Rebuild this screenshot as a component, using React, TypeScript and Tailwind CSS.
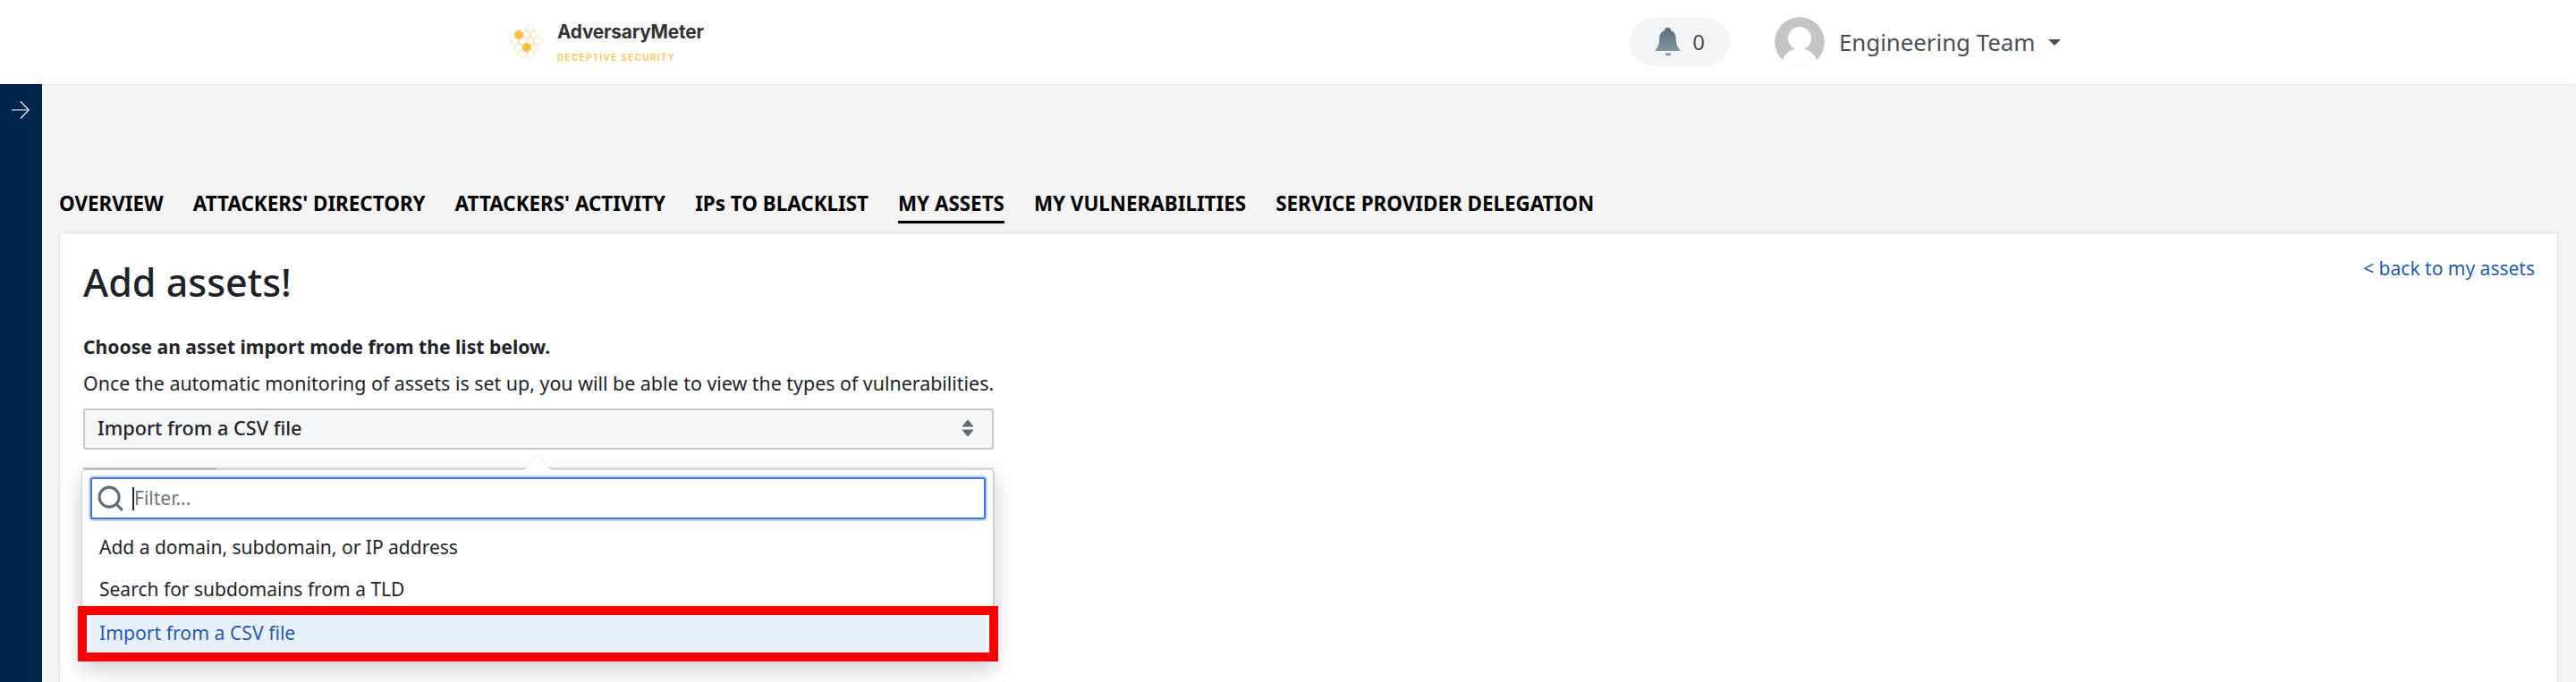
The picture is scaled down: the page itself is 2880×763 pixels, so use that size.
import { Search } from "lucide-react"

const tabs = [
  "OVERVIEW",
  "ATTACKERS' DIRECTORY",
  "ATTACKERS' ACTIVITY",
  "IPs TO BLACKLIST",
  "MY ASSETS",
  "MY VULNERABILITIES",
  "SERVICE PROVIDER DELEGATION",
]

const paleHexes = [
  [22, 7], [19, 14], [27, 14], [6, 21], [14, 21], [23, 21], [31, 21], [10, 28], [27, 28], [14, 35], [23, 35],
]

function hexPoints(x: number, y: number, r: number) {
  const w = r * 0.866
  return `${x},${y - r} ${x + w},${y - r / 2} ${x + w},${y + r / 2} ${x},${y + r} ${x - w},${y + r / 2} ${x - w},${y - r / 2}`
}

function Logo() {
  return (
    <div className="flex w-[220px] items-center">
      <svg width="40" height="44" viewBox="0 0 40 44" className="mr-[13px] shrink-0">
        {paleHexes.map(([x, y]) => (
          <polygon key={`${x}-${y}`} points={hexPoints(x, y, 5)} fill="none" stroke="#fbe2ad" strokeWidth="1" />
        ))}
        <polygon points={hexPoints(10, 14, 5.5)} fill="#fbbf3c" />
        <polygon points={hexPoints(19, 28, 5.5)} fill="#fbbf3c" />
      </svg>
      <div className="flex flex-col">
        <span className="-mt-[2px] text-[20.8px] leading-[26px] font-bold tracking-[-0.2px] whitespace-nowrap text-[#333333] font-['Inter',sans-serif]">AdversaryMeter</span>
        <span className="mt-[9px] text-[10px] leading-[12px] font-semibold tracking-[1.3px] whitespace-nowrap text-[#fbc04e] font-['Inter',sans-serif]">DECEPTIVE SECURITY</span>
      </div>
    </div>
  )
}

function Bell() {
  return (
    <svg width="30" height="34" viewBox="0 0 30 34">
      <defs>
        <linearGradient id="bell" x1="0" y1="0" x2="0" y2="1">
          <stop offset="0" stopColor="#5a6b79" />
          <stop offset="1" stopColor="#7f98a2" />
        </linearGradient>
      </defs>
      <path d="M15 1a3 3 0 0 1 3 3.2c4.200 1.300 5.600 4.800 5.800 9 .2 5.300 1.200 9 4.700 12.800v1H.5v-1C4 22.200 5 18.500 5.200 13.200c.2-4.200 1.600-7.700 5.800-9A3 3 0 0 1 15 1z" fill="url(#bell)" />
      <path d="M11.500 29.500h7c-.5 2-1.800 3-3.500 3s-3-1-3.500-3z" fill="#7f98a2" />
    </svg>
  )
}

function Header() {
  return (
    <header className="relative z-10 flex h-[94px] items-center bg-white pl-[570px] shadow-[0_1px_3px_rgba(0,0,0,0.06)]">
      <Logo />
      <div className="ml-[1032px] flex h-[54px] w-[112px] items-center justify-center gap-[12px] rounded-[27px] bg-[#f3f4f6]">
        <Bell />
        <span className="text-[24px] text-[#495057]">0</span>
      </div>
      <div className="ml-[50px] flex items-center">
        <svg width="56" height="56" viewBox="0 0 54 54" className="overflow-hidden rounded-full">
          <circle cx="27" cy="27" r="27" fill="#c4c4c4" />
          <circle cx="27" cy="23" r="12.500" fill="#fff" />
          <ellipse cx="27" cy="52" rx="19.500" ry="18" fill="#fff" />
        </svg>
        <span className="ml-[16px] text-[25.8px] text-[#495057]">Engineering Team</span>
        <span className="ml-[15px] h-0 w-0 border-x-[7px] border-t-[7px] border-x-transparent border-t-[#495057]" />
      </div>
    </header>
  )
}

function Dropdown() {
  return (
    <div className="absolute left-[24px] top-[265px] w-[1021px] rounded-t-[3px] rounded-b-[3px] border-b border-l border-r-2 border-[#cfcfcf] bg-white pt-[8px] shadow-[0_8px_24px_rgba(0,0,0,0.2)]">
      <div className="absolute -top-[3px] left-[1px] flex h-[3px] w-[1018px]">
        <div className="w-[149px] bg-[#bcc0c5]" />
        <div className="flex-1 bg-[#d6d8db]" />
      </div>
      <div className="absolute -top-[11px] left-[498px] h-[22px] w-[22px] rotate-45 bg-white shadow-[-1px_-1px_1px_rgba(0,0,0,0.06)]" />
      <div className="relative ml-[9px] mr-[8px] flex h-[47px] items-center rounded-[3px] border-2 border-[#3a78d8] bg-white pl-[4px] shadow-[0_0_0_2px_#c4d7f3]">
        <Search size={33} strokeWidth={2.2} className="text-[#5f6b7c]" />
        <span className="ml-[8px] h-[26px] w-[2px] bg-[#1f2937]" />
        <span className="text-[21px] text-[#6c757d]">Filter...</span>
      </div>
      <div className="mt-[8px] flex flex-col">
        <div className="flex h-[47px] items-center pl-[19px] text-[21px] text-[#212529]">Add a domain, subdomain, or IP address</div>
        <div className="flex h-[47px] items-center pl-[19px] text-[21px] text-[#212529]">Search for subdomains from a TLD</div>
        <div className="relative mb-[10px] ml-[8px] mr-[7px] mt-[5px] flex h-[42px] items-center bg-[#e9f0fa] pl-[11px] pb-[2px] text-[21.2px] text-[#1f5bb0]">
          Import from a CSV file
          <div className="absolute -inset-y-[10px] -inset-x-[13px] border-[10px] border-[#ff0000]" />
        </div>
      </div>
    </div>
  )
}

export default function App() {
  return (
    <div className="flex h-[763px] flex-col overflow-hidden bg-[#f4f4f4] font-['Noto_Sans',sans-serif]">
      <Header />
      <div className="flex min-h-0 flex-1">
        <aside className="w-[47px] shrink-0 bg-[#00264d] pl-[13px] pt-[19px]">
          <svg width="20" height="20" viewBox="0 0 20 20" fill="none" stroke="#ffffff" strokeWidth="1.2">
            <path d="M0 10H19M10 .5L19.200 10 10 19.500" />
          </svg>
        </aside>
        <main className="flex min-w-0 flex-1 flex-col pl-[19px] pr-[20px] pt-[118px]">
          <nav className="mb-[10px] flex gap-[33px]">
            {tabs.map((t) => (
              <div
                key={t}
                className={`h-[38px] pt-[2px] text-[22.4px] leading-[28px] font-bold whitespace-nowrap text-black ${t === "MY ASSETS" ? "border-b-[3px] border-black" : ""}`}
              >
                {t}
              </div>
            ))}
          </nav>
          <section className="relative h-[700px] shrink-0 border border-[#dee2e6] bg-white pl-[26px] pr-[25px] pt-[24px] shadow-[0_0_6px_rgba(0,0,0,0.04)]">
            <div className="flex items-start justify-between">
              <h1 className="pt-[1px] text-[43px] leading-[60px] font-medium text-[#1e2329]">Add assets!</h1>
              <a className="text-[21px] text-[#1f5bb0]">&lt; back to my assets</a>
            </div>
            <p className="mt-[28px] text-[21.15px] leading-[28px] font-bold text-[#212529]">Choose an asset import mode from the list below.</p>
            <p className="mt-[13px] text-[21.4px] leading-[28px] text-[#212529]">Once the automatic monitoring of assets is set up, you will be able to view the types of vulnerabilities.</p>
            <div className="mt-[14px] flex h-[46px] w-[1018px] items-center justify-between rounded-[3px] border-2 border-[#c8c8c8] bg-[#f5f6f8] pb-[2px] pl-[14px] pr-[20px]">
              <span className="text-[21.7px] font-medium text-[#212529]">Import from a CSV file</span>
              <svg width="14" height="20" viewBox="0 0 14 20">
                <path d="M7 1l6 7H1zM7 19l-6-7h12z" fill="#5f6b7c" stroke="#5f6b7c" strokeLinejoin="round" />
              </svg>
            </div>
            <Dropdown />
          </section>
        </main>
      </div>
    </div>
  )
}
